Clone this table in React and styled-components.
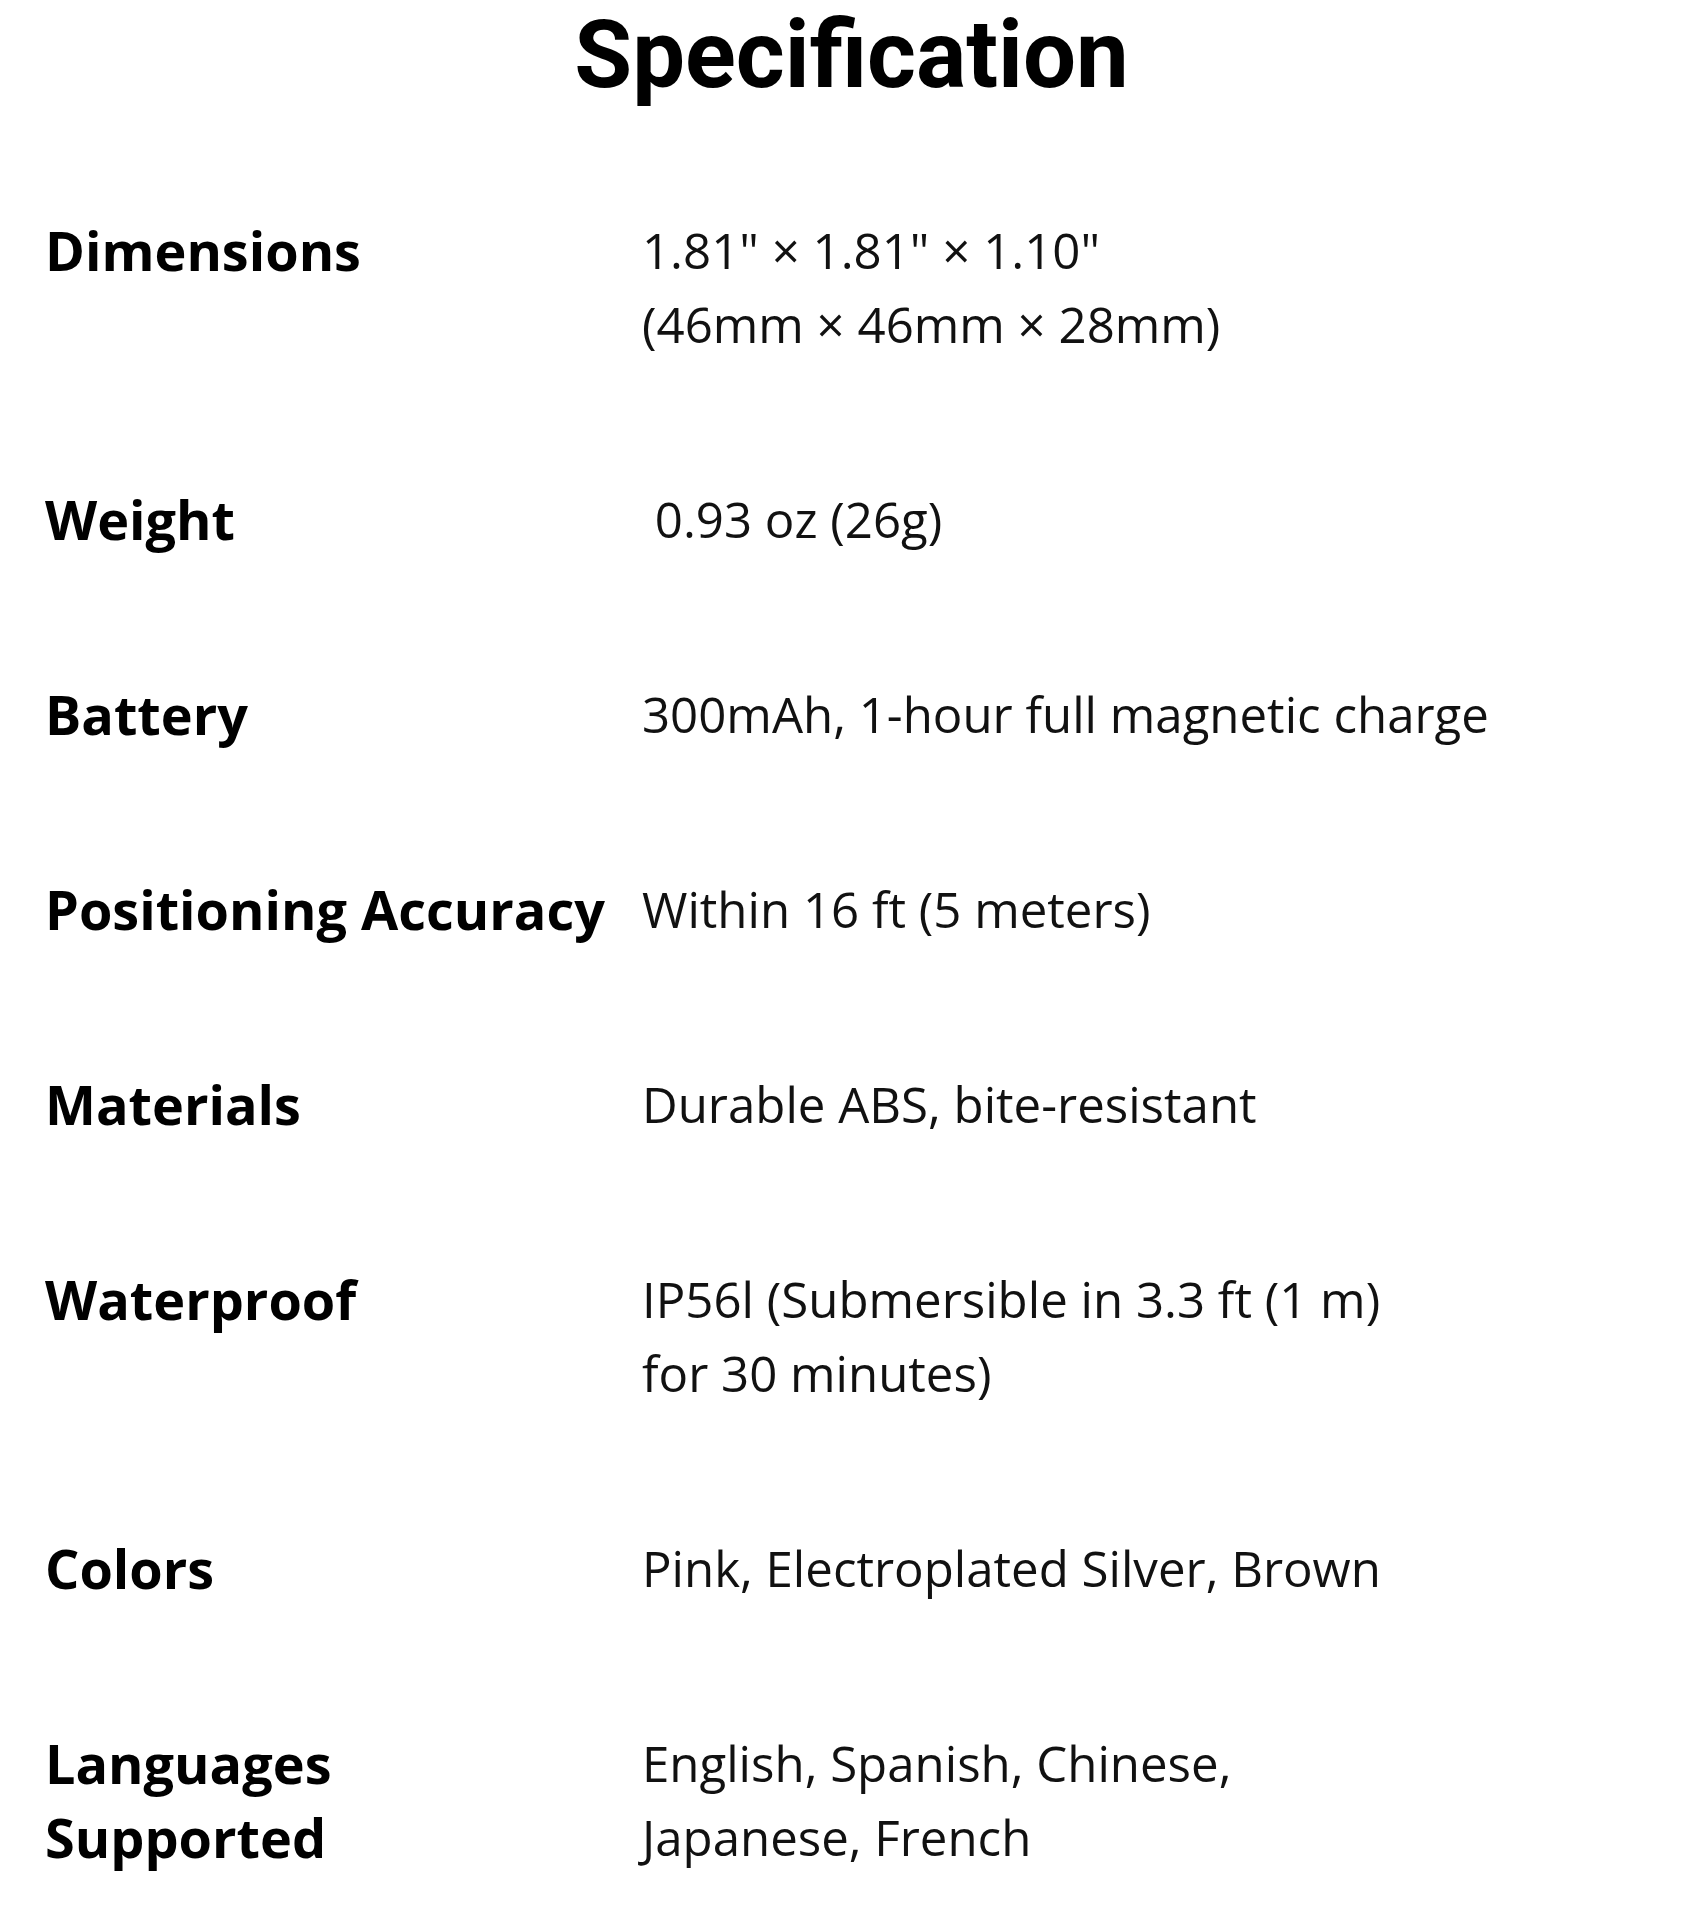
import React from "react";
import styled, { createGlobalStyle } from "styled-components";

const Global = createGlobalStyle`
  html, body { margin: 0; padding: 0; background: #ffffff; }
  body { font-family: "Open Sans", "Liberation Sans", sans-serif; color: #000; }
`;

const Page = styled.main`
  width: 1703px;
  min-height: 1920px;
  box-sizing: border-box;
  padding: 1px 0 0 45px;
`;

const Title = styled.h1`
  margin: 0 0 0 -45px;
  font-family: Roboto, "Liberation Sans", sans-serif;
  font-weight: 700;
  font-size: 94px;
  line-height: 108px;
  text-align: center;
  color: #000;
`;

const Table = styled.dl`
  margin: 104px 0 0 0;
  display: grid;
  grid-template-columns: 597px 1fr;
  row-gap: 121px;
`;

const Label = styled.dt`
  margin: 0;
  font-weight: 700;
  font-size: 54px;
  line-height: 74px;
  color: #000;
  white-space: pre-line;
`;

const Value = styled.dd`
  margin: 0;
  font-weight: 400;
  font-size: 49.2px;
  line-height: 74px;
  color: #111;
  white-space: pre-line;
`;

const specs = [
  ["Dimensions", "1.81\" \u00d7 1.81\" \u00d7 1.10\"\n(46mm \u00d7 46mm \u00d7 28mm)"],
  ["Weight", "\u00a00.93 oz (26g)"],
  ["Battery", "300mAh, 1-hour full magnetic charge"],
  ["Positioning Accuracy", "Within 16 ft (5 meters)"],
  ["Materials", "Durable ABS, bite-resistant"],
  ["Waterproof", "IP56l (Submersible in 3.3 ft (1 m)\nfor 30 minutes)"],
  ["Colors", "Pink, Electroplated Silver, Brown"],
  ["Languages\nSupported", "English, Spanish, Chinese,\nJapanese, French"],
];

export default function App() {
  return (
    <>
      <Global />
      <Page>
        <Title>Specification</Title>
        <Table>
          {specs.map(([k, v]) => (
            <React.Fragment key={k}>
              <Label>{k}</Label>
              <Value>{v}</Value>
            </React.Fragment>
          ))}
        </Table>
      </Page>
    </>
  );
}
